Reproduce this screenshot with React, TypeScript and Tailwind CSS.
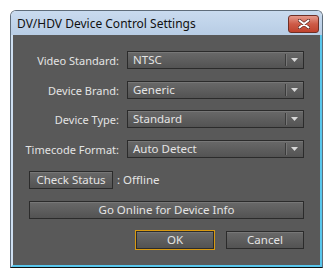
import React from "react";

const font = { fontFamily: '"Noto Sans", "Open Sans", sans-serif' };

function Select({ value }: { value: string }) {
  return (
    <div className="flex h-[18px] w-[177px] items-center border border-[#2b2b2b] bg-gradient-to-b from-[#696969] to-[#535353] shadow-[inset_0_1px_0_#777]">
      <span className="flex-1 pl-[5px] text-[11.5px] leading-none text-[#e4e4e4]">{value}</span>
      <div className="h-[12px] w-px bg-[#3a3a3a] shadow-[1px_0_0_#767676]" />
      <div className="flex w-[17px] items-center justify-center">
        <svg width="7" height="4" viewBox="0 0 7 4">
          <path d="M0 0H7L3.5 4Z" fill="#d8d8d8" />
        </svg>
      </div>
    </div>
  );
}

function Btn({ children, className = "" }: { children: React.ReactNode; className?: string }) {
  return (
    <div
      className={
        "flex h-[18px] items-center justify-center border border-[#2b2b2b] bg-gradient-to-b from-[#696969] to-[#535353] text-[11.5px] leading-none text-[#e4e4e4] shadow-[inset_0_1px_0_#777] " +
        className
      }
    >
      {children}
    </div>
  );
}

function Row({ label, value, mt }: { label: string; value: string; mt: string }) {
  return (
    <div className={"flex items-center " + mt}>
      <div className="w-[107px] pr-[1px] text-right text-[11px] leading-none text-[#e4e4e4]">{label}</div>
      <div className="ml-[7px]">
        <Select value={value} />
      </div>
    </div>
  );
}

export default function App() {
  return (
    <div className="h-[278px] w-[333px] bg-white pl-[10px] pt-[10px]" style={font}>
      <div className="flex h-[258px] w-[313px] flex-col rounded-t-[6px] border border-[#5f6d7b] border-b-[#101010]">
        <div className="flex h-[24px] items-center justify-between rounded-t-[5px] bg-gradient-to-b from-[#c9dbef] to-[#b8cde5] pl-[6px] pr-[3px]">
          <span className="mt-[2px] text-[12px] leading-none text-[#111]">DV/HDV Device Control Settings</span>
          <div className="mt-[2px] flex h-[18px] w-[31px] items-center justify-center rounded-[3px] border border-[#6e2f26] bg-gradient-to-b from-[#e59a8d] via-[#cd5b47] to-[#c0432e]">
            <svg width="12" height="10" viewBox="0 0 12 10">
              <path d="M1.5 1.5L10.5 8.5M10.5 1.5L1.5 8.5" stroke="#5a2a24" strokeWidth="3.4" strokeLinecap="round" />
              <path d="M1.5 1.5L10.5 8.5M10.5 1.5L1.5 8.5" stroke="#ffffff" strokeWidth="2" strokeLinecap="round" />
            </svg>
          </div>
        </div>
        <div className="flex flex-1 flex-col border-b-[2px] border-l-[2px] border-r-[2px] border-b-[#58c6ec] border-l-[#cfe0f2] border-r-[#58c6ec] bg-[#595959]">
          <Row label="Video Standard:" value="NTSC" mt="mt-[16px]" />
          <Row label="Device Brand:" value="Generic" mt="mt-[12px]" />
          <Row label="Device Type:" value="Standard" mt="mt-[11px]" />
          <Row label="Timecode Format:" value="Auto Detect" mt="mt-[12px]" />
          <div className="ml-[16px] mt-[13px] flex items-center">
            <Btn className="w-[84px]">Check Status</Btn>
            <span className="ml-[4px] text-[11.5px] leading-none text-[#e4e4e4]">: Offline</span>
          </div>
          <div className="ml-[16px] mt-[12px]">
            <Btn className="w-[275px]">Go Online for Device Info</Btn>
          </div>
          <div className="ml-[122px] mt-[11px] flex items-center">
            <div className="border border-[#d89a12]">
              <Btn className="w-[78px]">OK</Btn>
            </div>
            <div className="ml-[11px]">
              <Btn className="w-[78px]">Cancel</Btn>
            </div>
          </div>
        </div>
      </div>
    </div>
  );
}
